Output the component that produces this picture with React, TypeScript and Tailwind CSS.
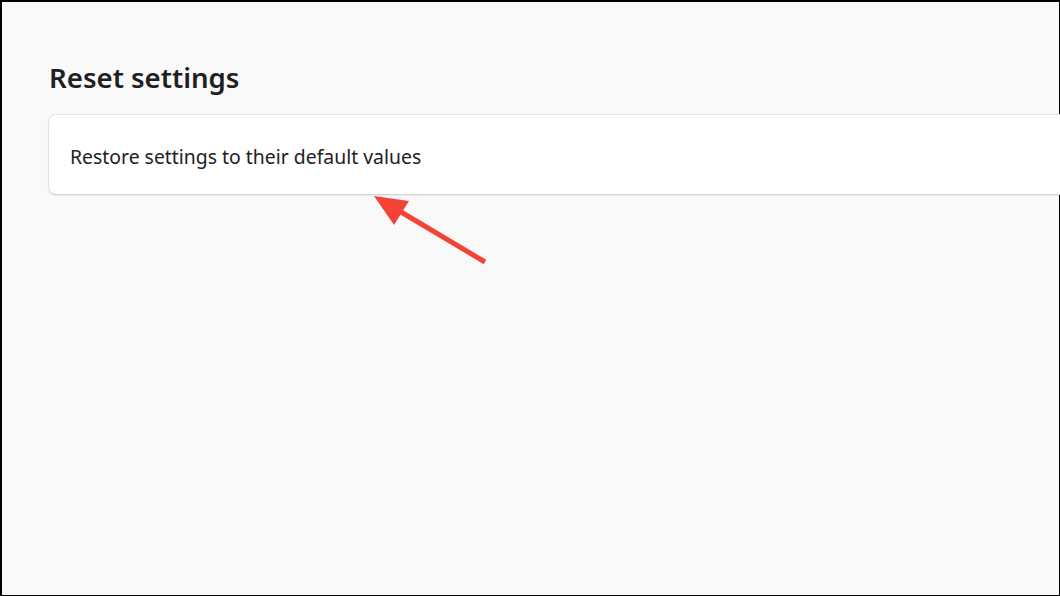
export default function App() {
  return (
    <div className="relative w-[1060px] h-[596px] overflow-hidden bg-black pl-[2px] pt-[2px] pr-px pb-px">
      <div
        className="w-full h-full bg-[#f9f9f9] pl-[46px] pt-[57px]"
        style={{ fontFamily: '"Noto Sans", "Open Sans", sans-serif' }}
      >
        <h1 className="text-[27.6px] leading-[36px] font-semibold text-[#1f1f1f] pl-px">
          Reset settings
        </h1>
        <div className="mt-[19px] -mr-[12px] h-[81px] flex items-center bg-white border border-[#e3e3e3] border-b-[#d4d4d4] rounded-[8px] shadow-[0_1px_1px_rgba(0,0,0,0.06)] pl-[21px] pt-[5px]">
          <span className="text-[19.4px] text-[#222222]">
            Restore settings to their default values
          </span>
        </div>
      </div>

      {/* annotation arrow */}
      <svg
        className="absolute left-0 top-0 pointer-events-none"
        width="1060"
        height="596"
      >
        <line
          x1="485"
          y1="262"
          x2="396"
          y2="209"
          stroke="#f44336"
          strokeWidth="5"
        />
        <polygon points="374,196 409,201 394,225" fill="#f44336" />
      </svg>
    </div>
  );
}
